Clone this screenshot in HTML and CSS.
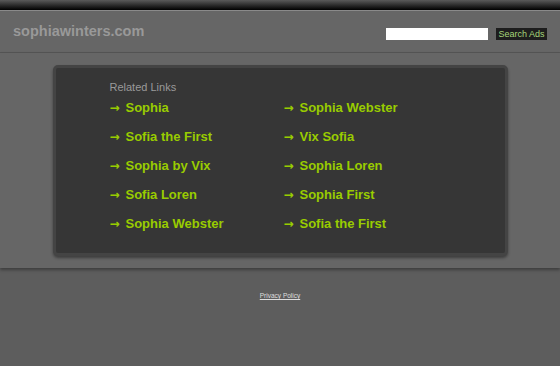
FILE: index.html
```html
<!DOCTYPE html>
<html lang="en">
<head>
    <meta charset="UTF-8">
    <meta name="viewport" content="width=device-width, initial-scale=1.0">
    <title>sophiawinters.com</title>
    <link rel="stylesheet" href="styles.css">
</head>
<body>
    <div class="topbar"></div>
    <div class="header">
        <div class="domain">sophiawinters.com</div>
        <form class="search">
            <input type="text" class="search-input">
            <button type="button" class="search-btn">Search Ads</button>
        </form>
    </div>
    <div class="main">
        <div class="panel">
            <div class="panel-title">Related Links</div>
            <div class="links">
                <a class="link" href="#"><span class="arrow">&rarr;</span>Sophia</a>
                <a class="link" href="#"><span class="arrow">&rarr;</span>Sophia Webster</a>
                <a class="link" href="#"><span class="arrow">&rarr;</span>Sofia the First</a>
                <a class="link" href="#"><span class="arrow">&rarr;</span>Vix Sofia</a>
                <a class="link" href="#"><span class="arrow">&rarr;</span>Sophia by Vix</a>
                <a class="link" href="#"><span class="arrow">&rarr;</span>Sophia Loren</a>
                <a class="link" href="#"><span class="arrow">&rarr;</span>Sofia Loren</a>
                <a class="link" href="#"><span class="arrow">&rarr;</span>Sophia First</a>
                <a class="link" href="#"><span class="arrow">&rarr;</span>Sophia Webster</a>
                <a class="link" href="#"><span class="arrow">&rarr;</span>Sofia the First</a>
            </div>
        </div>
    </div>
    <div class="footer">
        <a href="#" class="privacy">Privacy Policy</a>
    </div>
</body>
</html>
```

FILE: styles.css
```css
body {
    margin: 0;
    background: #5d5d5d;
    font-family: "Liberation Sans", Arial, sans-serif;
}

.topbar {
    height: 10px;
    background: linear-gradient(#5a5a5a, #000);
    border-bottom: 1px solid #8a8a8a;
}

.header {
    display: flex;
    justify-content: space-between;
    align-items: center;
    height: 41px;
    padding: 0 13px;
    background: #666;
    border-bottom: 1px solid #555;
}

.domain {
    color: #999;
    font-size: 14.5px;
    font-weight: bold;
    margin-top: -1px;
}

.search {
    display: flex;
    align-items: center;
    gap: 8px;
    margin: 5px 0 0;
}

.search-input {
    width: 102px;
    height: 12px;
    padding: 0;
    border: none;
    background: #fff;
    box-sizing: border-box;
}

.search-btn {
    height: 12px;
    padding: 0 2.5px;
    border: none;
    background: #1d1d1d;
    color: #a6d67a;
    font-family: "Liberation Sans", Arial, sans-serif;
    font-size: 9px;
    line-height: 12px;
}

.main {
    background: #666;
    padding: 12px 0;
    box-shadow: 0 2px 3px rgba(0, 0, 0, 0.35);
}

.panel {
    width: 395px;
    margin: 0 auto;
    padding: 13px 0 20px 54px;
    background: #363636;
    border: 3px solid #444;
    border-radius: 5px;
    box-shadow: 0 2px 3px rgba(0, 0, 0, 0.4);
}

.panel-title {
    color: #9a9a9a;
    font-size: 11px;
    line-height: 13px;
    margin-bottom: 5px;
}

.links {
    display: grid;
    grid-template-columns: 174px 174px;
    row-gap: 11px;
}

.link {
    color: #9c0;
    font-size: 13px;
    font-weight: bold;
    text-decoration: none;
    line-height: 18px;
}

.arrow {
    display: inline-block;
    width: 16px;
    font-family: "DejaVu Sans", sans-serif;
    font-size: 12px;
}

.footer {
    text-align: center;
    padding-top: 24px;
    font-size: 6.5px;
    line-height: 8px;
}

.privacy {
    color: #ddd;
}
```
